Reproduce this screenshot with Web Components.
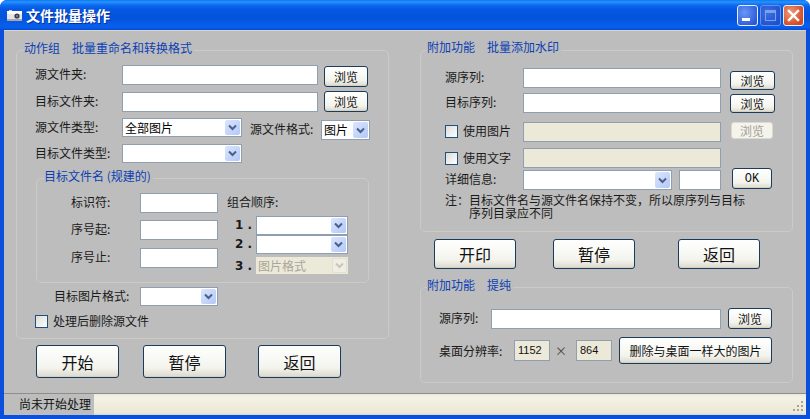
<!DOCTYPE html>
<html lang="zh">
<head>
<meta charset="utf-8">
<title>文件批量操作</title>
<style>
  html, body { margin: 0; padding: 0; background: #fff; }
  body { font: 12px/18px "Noto Sans CJK SC", "Liberation Sans", sans-serif; color: #111; }
  .col { display: flex; flex-direction: column; }
</style>
</head>
<body>
<xp-window heading="文件批量操作" status="尚未开始处理">
  <div class="col" style="width:373px;flex:none">
    <xp-group legend="动作组　批量重命名和转换格式" style="height:287px;--pad-top:14px;--pad-left:18px;--legend-left:7px">
      <xp-row>
        <xp-label style="width:87px">源文件夹:</xp-label>
        <xp-field style="width:196px"></xp-field>
        <xp-button style="width:44px;height:21px;margin:1px 0 0 6px">浏览</xp-button>
      </xp-row>
      <xp-row style="margin-top:7px">
        <xp-label style="width:87px">目标文件夹:</xp-label>
        <xp-field style="width:196px"></xp-field>
        <xp-button style="width:44px;height:21px;margin:-1px 0 0 6px">浏览</xp-button>
      </xp-row>
      <xp-row style="margin-top:6px;height:19px">
        <xp-label style="width:87px">源文件类型:</xp-label>
        <xp-select style="width:120px;height:19px">全部图片</xp-select>
        <xp-label style="width:71px;margin-left:8px;margin-top:2px">源文件格式:</xp-label>
        <xp-select style="width:49px;height:20px;margin-top:2px">图片</xp-select>
      </xp-row>
      <xp-row style="margin-top:7px;height:19px">
        <xp-label style="width:87px">目标文件类型:</xp-label>
        <xp-select style="width:120px;height:19px"></xp-select>
      </xp-row>
      <xp-group legend="目标文件名 (规建的)" style="margin:15px 0 0 1px;width:331px;height:103px;--pad-top:14px;--pad-left:34px;--legend-left:7px;--legend-top:-12px">
        <xp-row style="height:auto">
          <div class="col" style="width:114px;flex:none">
            <xp-row>
              <xp-label style="width:69px">标识符:</xp-label>
              <xp-field style="width:78px"></xp-field>
            </xp-row>
            <xp-row style="margin-top:7px">
              <xp-label style="width:69px">序号起:</xp-label>
              <xp-field style="width:78px"></xp-field>
            </xp-row>
            <xp-row style="margin-top:8px">
              <xp-label style="width:69px">序号止:</xp-label>
              <xp-field style="width:78px"></xp-field>
            </xp-row>
          </div>
          <div class="col" style="margin-left:42px;width:122px;flex:none">
            <xp-label style="height:18px">组合顺序:</xp-label>
            <xp-row style="margin-top:5px;height:19px">
              <xp-label bold style="width:29px;padding-left:8px;box-sizing:border-box">1 .</xp-label>
              <xp-select style="width:92px;height:19px"></xp-select>
            </xp-row>
            <xp-row style="height:20px">
              <xp-label bold style="width:29px;padding-left:8px;box-sizing:border-box">2 .</xp-label>
              <xp-select style="width:92px;height:19px"></xp-select>
            </xp-row>
            <xp-row style="margin-top:2px;height:16px">
              <xp-label bold style="width:29px;padding-left:8px;box-sizing:border-box">3 .</xp-label>
              <xp-select disabled style="width:92px;height:17px">图片格式</xp-select>
            </xp-row>
          </div>
        </xp-row>
      </xp-group>
      <xp-row style="margin-top:4px;height:19px;padding-left:19px">
        <xp-label style="width:86px">目标图片格式:</xp-label>
        <xp-select style="width:78px;height:19px"></xp-select>
      </xp-row>
      <xp-row style="margin-top:8px;height:14px">
        <xp-check>处理后删除源文件</xp-check>
      </xp-row>
    </xp-group>
    <xp-row style="margin-top:6px;height:33px;padding-left:20px;gap:24px">
      <xp-button big style="width:83px;height:33px">开始</xp-button>
      <xp-button big style="width:83px;height:33px">暂停</xp-button>
      <xp-button big style="width:83px;height:33px;margin-left:8px">返回</xp-button>
    </xp-row>
  </div>

  <div class="col" style="width:373px;flex:none;margin-left:31px">
    <xp-group legend="附加功能　批量添加水印" style="height:180px;--pad-top:17px;--pad-left:24px;--legend-left:6px;--legend-top:-13px">
      <xp-row>
        <xp-label style="width:78px">源序列:</xp-label>
        <xp-field style="width:198px"></xp-field>
        <xp-button style="width:45px;height:19px;margin:3px 0 0 9px">浏览</xp-button>
      </xp-row>
      <xp-row style="margin-top:5px">
        <xp-label style="width:78px">目标序列:</xp-label>
        <xp-field style="width:198px"></xp-field>
        <xp-button style="width:45px;height:19px;margin:1px 0 0 9px">浏览</xp-button>
      </xp-row>
      <xp-row style="margin-top:9px">
        <xp-check style="width:78px;margin-top:2px">使用图片</xp-check>
        <xp-field disabled style="width:198px"></xp-field>
        <xp-button disabled style="width:42px;height:17px;margin-left:10px">浏览</xp-button>
      </xp-row>
      <xp-row style="margin-top:6px">
        <xp-check style="width:78px;margin-top:3px">使用文字</xp-check>
        <xp-field disabled style="width:198px"></xp-field>
      </xp-row>
      <xp-row style="margin-top:2px">
        <xp-label style="width:78px">详细信息:</xp-label>
        <xp-select style="width:149px;height:20px"></xp-select>
        <xp-field style="width:42px;margin-left:7px"></xp-field>
        <xp-button mono style="width:40px;height:21px;margin:-2px 0 0 11px">OK</xp-button>
      </xp-row>
      <xp-note style="margin-top:5px">
        <span slot="mark">注：</span>目标文件名与源文件名保持不变，所以原序列与目标<br>序列目录应不同
      </xp-note>
    </xp-group>
    <xp-row style="margin-top:7px;height:30px;padding-left:14px;gap:37px">
      <xp-button big style="width:82px;height:30px">开印</xp-button>
      <xp-button big style="width:82px;height:30px">暂停</xp-button>
      <xp-button big style="width:82px;height:30px;margin-left:6px">返回</xp-button>
    </xp-row>
    <xp-group legend="附加功能　提纯" style="margin-top:18px;height:94px;--pad-top:21px;--pad-left:18px;--legend-left:6px;--legend-top:-12px">
      <xp-row>
        <xp-label style="width:52px">源序列:</xp-label>
        <xp-field style="width:230px"></xp-field>
        <xp-button style="width:44px;height:21px;margin:-1px 0 0 7px">浏览</xp-button>
      </xp-row>
      <xp-row style="margin-top:8px;height:27px;align-items:center">
        <xp-label style="width:75px">桌面分辨率:</xp-label>
        <xp-field disabled style="width:36px;height:21px;--pad:3px">1152</xp-field>
        <xp-label style="width:21px;padding-left:5px;font-size:12px;color:#444">×</xp-label>
        <xp-field disabled style="width:36px;height:21px;--pad:3px">864</xp-field>
        <xp-button style="width:153px;height:27px;margin-left:7px">删除与桌面一样大的图片</xp-button>
      </xp-row>
    </xp-group>
  </div>
</xp-window>

<script>
// every control is the same small pattern: a styled shadow root with a slot
class ShadowBox extends HTMLElement {
  constructor (html) {
    super()
    this.attachShadow({ mode: 'open' }).innerHTML = html
  }
}

customElements.define('xp-window', class extends ShadowBox {
  constructor () {
    super(`
      <style>
        :host { display: flex; flex-direction: column; width: 810px; height: 419px; overflow: hidden;
          border-radius: 7px 7px 0 0; background: #0a50dc; box-sizing: border-box; }
        #bar { flex: none; height: 30px; display: flex; align-items: center; padding: 0 6px 0 7px; box-sizing: border-box;
          background: linear-gradient(180deg, #0a7af0 0, #2a90ff 2px, #0c6cf2 5px, #0558e2 9px, #0453dc 18px, #0660ec 26px, #0a5ae4 28px, #0448d4 30px); }
        #title { margin-left: 4px; color: #fff; font-weight: 700; font-size: 14px; line-height: 20px; text-shadow: 1px 1px 0 #0a2f9a; flex: 1; }
        .wb { width: 21px; height: 21px; box-sizing: border-box; margin-left: 2px; border: 1px solid #e8eefc; border-radius: 3px; display: block; }
        #min { background: radial-gradient(circle at 35% 35%, #6a96f6, #2a5ad8 80%); }
        #max { background: radial-gradient(circle at 35% 35%, #3a70e6, #1f50cc 80%); border-color: #6a90e4; }
        #close { background: radial-gradient(circle at 35% 35%, #ee9a7c, #d44a22 75%); }
        #main { flex: 1; display: flex; margin: 0 4px; padding: 0 0 0 12px; background: #bdbdbd; min-height: 0; border-top: 1px solid #d6d6ce; }
        #status { flex: none; height: 22px; margin: 0 4px 4px; display: flex; background: linear-gradient(180deg, #8e8e86 0, #8e8e86 1px, #ece9d8 1px, #f4f2e6 4px, #ece9d8 20px, #d8d4c4 22px); position: relative; }
        #panel { width: 75px; padding: 0 0 0 15px; background: #bdbdbd; border-top: 1px solid #8e8e86; line-height: 20px; }
        #grip { position: absolute; right: 2px; bottom: 3px; }
      </style>
      <div id="bar">
        <svg width="15" height="11" viewBox="0 0 15 11">
          <rect x="0" y="1" width="15" height="10" rx="1" fill="#e4e4e4"/>
          <rect x="0" y="1" width="15" height="3" fill="#fdfdfd"/>
          <rect x="0" y="9" width="15" height="2" fill="#a8a8b0"/>
          <circle cx="10" cy="6" r="2.6" fill="#3c3c48"/>
          <circle cx="10" cy="6" r="1" fill="#8a8a9a"/>
          <rect x="2" y="0" width="3" height="1" fill="#d0d0d0"/>
        </svg>
        <div id="title"></div>
        <span class="wb" id="min">
          <svg width="19" height="19"><rect x="4" y="12" width="8" height="3" fill="#fff"/></svg>
        </span>
        <span class="wb" id="max">
          <svg width="19" height="19"><rect x="4.5" y="4.5" width="10" height="10" fill="none" stroke="#7ea0ea"/><rect x="4" y="4" width="11" height="3" fill="#7ea0ea"/></svg>
        </span>
        <span class="wb" id="close">
          <svg width="19" height="19"><path d="M5 5l9 9M14 5l-9 9" stroke="#fff" stroke-width="2.4" stroke-linecap="square"/></svg>
        </span>
      </div>
      <div id="main"><slot></slot></div>
      <div id="status">
        <div id="panel"></div>
        <svg id="grip" width="11" height="11" fill="#a8a494">
          <rect x="8" y="0" width="2" height="2"/><rect x="4" y="4" width="2" height="2"/><rect x="8" y="4" width="2" height="2"/>
          <rect x="0" y="8" width="2" height="2"/><rect x="4" y="8" width="2" height="2"/><rect x="8" y="8" width="2" height="2"/>
        </svg>
      </div>`)
    this.shadowRoot.getElementById('title').textContent = this.getAttribute('heading')
    this.shadowRoot.getElementById('panel').textContent = this.getAttribute('status')
  }
})

customElements.define('xp-group', class extends ShadowBox {
  constructor () {
    super(`
      <style>
        :host { display: block; position: relative; box-sizing: content-box; margin-top: 19px; border: 1px solid #cbcbc4; border-radius: 5px; }
        #legend { position: absolute; top: var(--legend-top, -12px); left: var(--legend-left, 7px); color: #0c3fb4; line-height: 18px; background: #bdbdbd; padding-right: 2px; white-space: pre; }
        #inner { padding: var(--pad-top, 14px) 0 0 var(--pad-left, 18px); }
      </style>
      <div id="legend"></div>
      <div id="inner"><slot></slot></div>`)
    this.shadowRoot.getElementById('legend').textContent = this.getAttribute('legend')
  }
})

customElements.define('xp-row', class extends ShadowBox {
  constructor () {
    super(`<style>:host { display: flex; align-items: flex-start; height: 20px; }</style><slot></slot>`)
  }
})

customElements.define('xp-label', class extends ShadowBox {
  constructor () {
    super(`
      <style>
        :host { display: block; flex: none; line-height: 18px; white-space: nowrap; color: #1a1a1a; }
        :host([bold]) { font-weight: 700; font-family: "DejaVu Sans", sans-serif; font-size: 12px; }
      </style>
      <slot></slot>`)
  }
})

customElements.define('xp-field', class extends ShadowBox {
  constructor () {
    super(`
      <style>
        :host { display: block; flex: none; height: 20px; box-sizing: border-box; background: #fff; border: 1px solid #8e9fb2;
          padding-left: var(--pad, 2px); font: 11px/19px "Liberation Sans", sans-serif; }
        :host([disabled]) { background: #ece9d8; }
      </style>
      <slot></slot>`)
  }
})

customElements.define('xp-select', class extends ShadowBox {
  constructor () {
    super(`
      <style>
        :host { display: flex; flex: none; box-sizing: border-box; background: #fff; border: 1px solid #8e9fb2; padding: 1px; }
        #text { flex: 1; padding-left: 1px; line-height: 15px; white-space: nowrap; overflow: hidden; color: #000; }
        #arrow { flex: none; width: 15px; border-radius: 2px; display: flex; align-items: center; justify-content: center;
          background: linear-gradient(135deg, #dbe6fd, #b3c8f6); }
        svg { stroke: #4a5f8c; }
        :host([disabled]) { background: #ece9d8; border-color: #ece9d8; padding: 0; }
        :host([disabled]) #text { color: #a8a69a; }
        :host([disabled]) #arrow { background: #f0eee2; border: 1px solid #e2e0d4; box-sizing: border-box; }
        :host([disabled]) svg { stroke: #c8c6ba; }
      </style>
      <div id="text"><slot></slot></div>
      <div id="arrow"><svg width="9" height="7"><path d="M1 1.5l3.5 3.5 3.5-3.5" fill="none" stroke-width="2"/></svg></div>`)
  }
})

customElements.define('xp-button', class extends ShadowBox {
  constructor () {
    super(`
      <style>
        :host { display: flex; flex: none; align-items: center; justify-content: center; box-sizing: border-box;
          border: 1px solid #1a3c5c; border-radius: 3px; color: #111; font-size: 12px;
          background: linear-gradient(180deg, #fff, #f4f4ee 70%, #dcd8cc); box-shadow: inset 0 -1px 0 #d4d0c4; }
        :host([big]) { font-size: 16px; }
        :host([mono]) { font-family: "Liberation Mono", monospace; }
        :host([disabled]) { border-color: #ddd9cc; color: #a2a096; background: #f4f3ec; box-shadow: none; }
      </style>
      <slot></slot>`)
  }
})

customElements.define('xp-check', class extends ShadowBox {
  constructor () {
    super(`
      <style>
        :host { display: flex; flex: none; align-items: center; height: 14px; line-height: 14px; white-space: nowrap; color: #1a1a1a; }
        #box { width: 13px; height: 13px; box-sizing: border-box; border: 1px solid #1c5180; margin-right: 5px;
          background: linear-gradient(135deg, #dcdcd6, #fff); flex: none; }
      </style>
      <div id="box"></div><slot></slot>`)
  }
})

customElements.define('xp-note', class extends ShadowBox {
  constructor () {
    super(`
      <style>
        :host { display: flex; line-height: 13px; color: #1a1a1a; white-space: nowrap; font-family: "Liberation Sans", "Noto Sans CJK SC", sans-serif; }
        #mark { width: 24px; flex: none; }
      </style>
      <div id="mark"><slot name="mark"></slot></div><div><slot></slot></div>`)
  }
})
</script>
</body>
</html>
